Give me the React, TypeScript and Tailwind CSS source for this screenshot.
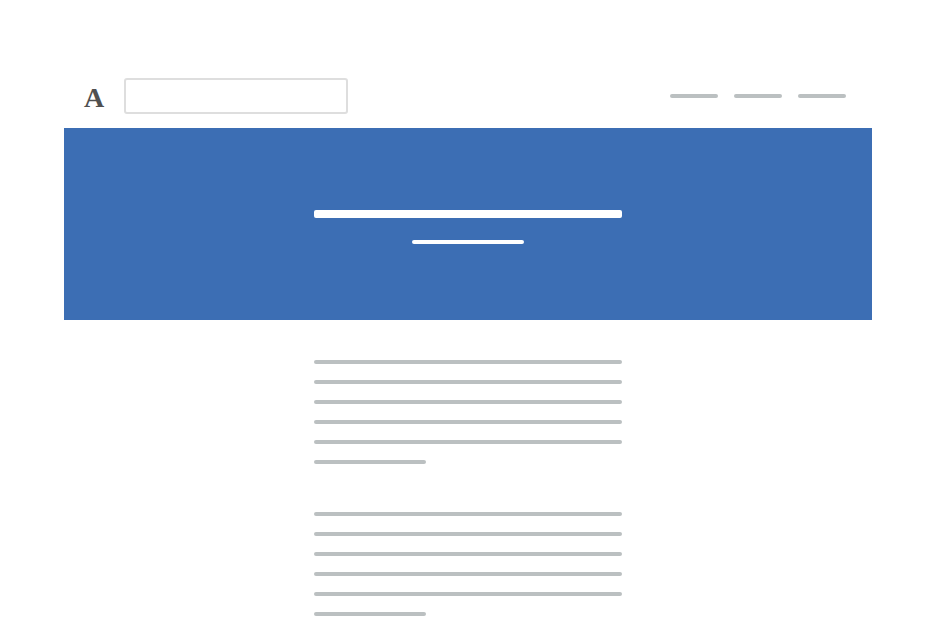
import React from 'react';

const Line: React.FC<{ w?: string }> = ({ w = 'w-[308px]' }) => (
  <div className={`${w} h-1 rounded-full bg-[#bbc0c1]`} />
);

const Paragraph: React.FC = () => (
  <div className="flex flex-col gap-4">
    <Line />
    <Line />
    <Line />
    <Line />
    <Line />
    <Line w="w-[112px]" />
  </div>
);

const App: React.FC = () => {
  return (
    <div className="w-[936px] h-[640px] bg-white overflow-hidden">
      <div className="mx-16 pt-[78px]">
        {/* header */}
        <div className="flex items-center h-9 pl-5 pr-[26px] mb-[14px]">
          <span className="text-[28px] font-bold leading-none text-[#505050] font-['Liberation_Serif',serif] mt-1">
            A
          </span>
          <div className="ml-5 w-[224px] h-9 rounded-[3px] border-2 border-[#dedede] bg-white" />
          <div className="ml-auto flex gap-4">
            <Line w="w-12" />
            <Line w="w-12" />
            <Line w="w-12" />
          </div>
        </div>

        {/* hero */}
        <div className="h-[192px] bg-[#3c6eb4] flex flex-col items-center pt-[82px]">
          <div className="w-[308px] h-2 rounded-[2px] bg-white" />
          <div className="mt-[22px] w-[112px] h-1 rounded-full bg-white" />
        </div>
      </div>

      {/* body */}
      <div className="flex flex-col items-center gap-12 pt-10">
        <Paragraph />
        <Paragraph />
      </div>
    </div>
  );
};

export default App;
